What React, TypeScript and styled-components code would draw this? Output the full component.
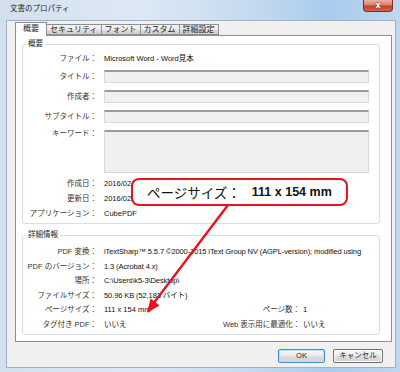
import React from "react";
import styled, { createGlobalStyle } from "styled-components";

const GlobalStyle = createGlobalStyle`
  html, body { margin: 0; padding: 0; background: #ffffff; }
  body { font-family: "Liberation Sans", "Noto Sans CJK JP", sans-serif; }
  * { box-sizing: border-box; }
`;

const Stage = styled.div`
  position: relative;
  width: 400px;
  height: 372px;
  overflow: hidden;
`;

const Window = styled.div`
  width: 400px;
  height: 372px;
  display: flex;
  flex-direction: column;
  padding: 0 4px 4px 6px;
  background: linear-gradient(90deg, #d2e0ee 0%, #dce8f4 35%, #c6dbf0 62%, #a9cbee 82%, #c0d7ee 100%);
`;

const TitleBar = styled.div`
  height: 20px;
  display: flex;
  align-items: flex-start;
  justify-content: space-between;
`;

const Title = styled.div`
  padding-left: 4px;
  font-family: "Noto Sans CJK JP", sans-serif;
  font-size: 7.5px;
  line-height: 16px;
  color: #1b1b1b;
`;

const CloseButton = styled.div`
  width: 30px;
  height: 12px;
  margin-right: 3px;
  border: 1px solid #7a2e22;
  border-top: none;
  border-radius: 0 0 4px 4px;
  background: linear-gradient(#eab0a4 0%, #d9826f 45%, #c2412a 55%, #d4654d 100%);
  color: #ffffff;
  font-family: "DejaVu Sans", sans-serif;
  font-weight: bold;
  font-size: 8px;
  line-height: 11px;
  text-align: center;
  text-shadow: 0 0 2px #6b1b10;
`;

const Client = styled.div`
  flex: 1;
  display: flex;
  flex-direction: column;
  background: #f0f0f0;
  border: 1px solid #9fb1c4;
  padding: 1px 3px 4px 8px;
`;

const TabRow = styled.div`
  height: 13px;
  display: flex;
  align-items: flex-end;
  position: relative;
  z-index: 1;
`;

const Tab = styled.div<{ $active?: boolean }>`
  height: ${(p) => (p.$active ? 14 : 11)}px;
  margin-bottom: ${(p) => (p.$active ? -1 : 0)}px;
  margin-right: -1px;
  padding: 0 ${(p) => (p.$active ? 7 : 3)}px;
  border: 1px solid #8c8e94;
  border-bottom: ${(p) => (p.$active ? "none" : "1px solid #8c8e94")};
  background: ${(p) =>
    p.$active ? "#ffffff" : "linear-gradient(#f3f3f3 0%, #ebebeb 50%, #dddddd 50%, #cfcfcf 100%)"};
  font-size: 8px;
  line-height: ${(p) => (p.$active ? 12 : 9)}px;
  color: #1e1e1e;
  white-space: nowrap;
  position: relative;
  z-index: ${(p) => (p.$active ? 2 : 1)};
`;

const Panel = styled.div`
  height: 307px;
  background: #ffffff;
  border: 1px solid #8c8e94;
  padding: 3px 11px 0 6px;
  display: flex;
  flex-direction: column;
  gap: 6px;
`;

const Group = styled.fieldset<{ $pt: number; $pr: number; $pb: number }>`
  margin: 0;
  min-width: 0;
  border: 1px solid #d5dfe5;
  border-radius: 3px;
  padding: ${(p) => `${p.$pt}px ${p.$pr}px ${p.$pb}px 0`};
`;

const Legend = styled.legend`
  margin-left: 3px;
  padding: 0 2px;
  font-size: 7.5px;
  line-height: 10px;
  color: #1e1e1e;
`;

const SummaryGrid = styled.div`
  display: grid;
  grid-template-columns: 81px 1fr;
  row-gap: 3px;
  align-items: start;
  font-size: 7.5px;
`;

const DetailGrid = styled.div`
  display: grid;
  grid-template-columns: 81px 1fr 80px 76px;
  font-size: 7.5px;
  line-height: 14.5px;
`;

const Label = styled.div<{ $pt?: number }>`
  text-align: right;
  padding-right: 7px;
  padding-top: ${(p) => p.$pt ?? 0}px;
  line-height: 12px;
  color: #333333;
  white-space: nowrap;
`;

const DetailLabel = styled.div<{ $pr?: number }>`
  text-align: right;
  padding-right: ${(p) => p.$pr ?? 7}px;
  color: #333333;
  white-space: nowrap;
`;

const Value = styled.div`
  line-height: 12px;
  color: #111111;
  white-space: nowrap;
`;

const DetailValue = styled.div<{ $span?: boolean }>`
  grid-column: ${(p) => (p.$span ? "2 / -1" : "auto")};
  color: #111111;
  white-space: nowrap;
  overflow: hidden;
  letter-spacing: ${(p) => (p.$span ? "-0.1px" : "0")};
`;

const FieldCell = styled.div`
  padding: 2px 0;
`;

const Field = styled.div<{ $h: number }>`
  height: ${(p) => p.$h}px;
  background: #f0f0f0;
  border: 1px solid #d9d9d9;
  border-top: 2px solid #9b9b9b;
`;

const ButtonRow = styled.div`
  display: flex;
  justify-content: flex-end;
  gap: 8px;
  margin-top: 7px;
  padding-right: 9px;
`;

const Button = styled.div<{ $w: number; $primary?: boolean }>`
  width: ${(p) => p.$w}px;
  height: 14px;
  border: 1px solid ${(p) => (p.$primary ? "#3c8fd0" : "#707070")};
  border-radius: 2px;
  box-shadow: ${(p) => (p.$primary ? "inset 0 0 0 1px #b9e2f8" : "inset 0 0 0 1px #fbfbfb")};
  background: linear-gradient(#f6f6f6 0%, #ececec 50%, #dedede 50%, #d2d2d2 100%);
  font-size: 7.5px;
  line-height: 12px;
  text-align: center;
  color: #1e1e1e;
`;

const Callout = styled.div`
  position: absolute;
  left: 131px;
  top: 178px;
  width: 217px;
  height: 28px;
  border: 2px solid #e8141c;
  border-radius: 8px;
  background: #ffffff;
  display: flex;
  align-items: center;
  padding-left: 14px;
  color: #111111;
`;

const CalloutLabel = styled.span`
  font-family: "Noto Sans CJK JP", sans-serif;
  font-size: 13.5px;
  font-weight: 400;
`;

const CalloutValue = styled.span`
  margin-left: 11px;
  font-family: "Liberation Sans", sans-serif;
  font-size: 12.5px;
  font-weight: bold;
`;

const Overlay = styled.svg`
  position: absolute;
  left: 0;
  top: 0;
  pointer-events: none;
`;

const summaryText: [string, string][] = [
  ["作成日：", "2016/02/05 14:32:10"],
  ["更新日：", "2016/02/05 14:32:10"],
  ["アプリケーション：", "CubePDF"],
];

const detailRows: [string, string][] = [
  ["PDF 変換：", "iTextSharp™ 5.5.7 ©2000-2015 iText Group NV (AGPL-version); modified using"],
  ["PDF のバージョン：", "1.3 (Acrobat 4.x)"],
  ["場所：", "C:\\Users\\k5-3\\Desktop\\"],
  ["ファイルサイズ：", "50.96 KB (52,183 バイト)"],
];

export default function App() {
  return (
    <Stage>
      <GlobalStyle />
      <Window>
        <TitleBar>
          <Title>文書のプロパティ</Title>
          <CloseButton>x</CloseButton>
        </TitleBar>
        <Client>
          <TabRow>
            <Tab $active>概要</Tab>
            <Tab>セキュリティ</Tab>
            <Tab>フォント</Tab>
            <Tab>カスタム</Tab>
            <Tab>詳細設定</Tab>
          </TabRow>
          <Panel>
            <Group $pt={4} $pr={10} $pb={3}>
              <Legend>概要</Legend>
              <SummaryGrid>
                <Label>ファイル：</Label>
                <Value>Microsoft Word - Word見本</Value>
                <Label $pt={2.5}>タイトル：</Label>
                <FieldCell><Field $h={13} /></FieldCell>
                <Label $pt={2.5}>作成者：</Label>
                <FieldCell><Field $h={13} /></FieldCell>
                <Label $pt={2.5}>サブタイトル：</Label>
                <FieldCell><Field $h={13} /></FieldCell>
                <Label $pt={0}>キーワード：</Label>
                <FieldCell><Field $h={43} /></FieldCell>
                {summaryText.map(([l, v]) => (
                  <React.Fragment key={l}>
                    <Label>{l}</Label>
                    <Value>{v}</Value>
                  </React.Fragment>
                ))}
              </SummaryGrid>
            </Group>
            <Group $pt={5} $pr={0} $pb={2}>
              <Legend>詳細情報</Legend>
              <DetailGrid>
                {detailRows.map(([l, v]) => (
                  <React.Fragment key={l}>
                    <DetailLabel>{l}</DetailLabel>
                    <DetailValue $span>{v}</DetailValue>
                  </React.Fragment>
                ))}
                <DetailLabel>ページサイズ：</DetailLabel>
                <DetailValue>111 x 154 mm</DetailValue>
                <DetailLabel $pr={3}>ページ数：</DetailLabel>
                <DetailValue>1</DetailValue>
                <DetailLabel>タグ付き PDF：</DetailLabel>
                <DetailValue>いいえ</DetailValue>
                <DetailLabel $pr={3}>Web 表示用に最適化：</DetailLabel>
                <DetailValue>いいえ</DetailValue>
              </DetailGrid>
            </Group>
          </Panel>
          <ButtonRow>
            <Button $w={47} $primary>OK</Button>
            <Button $w={50}>キャンセル</Button>
          </ButtonRow>
        </Client>
      </Window>
      <Callout>
        <CalloutLabel>ページサイズ：</CalloutLabel>
        <CalloutValue>111 x 154 mm</CalloutValue>
      </Callout>
      <Overlay width="400" height="372" viewBox="0 0 400 372">
        <line x1="228" y1="205" x2="153" y2="304" stroke="#e8141c" strokeWidth="2.4" strokeLinecap="round" />
        <polygon points="147,313 159.5,305.5 150.5,298.5" fill="#e8141c" />
      </Overlay>
    </Stage>
  );
}
